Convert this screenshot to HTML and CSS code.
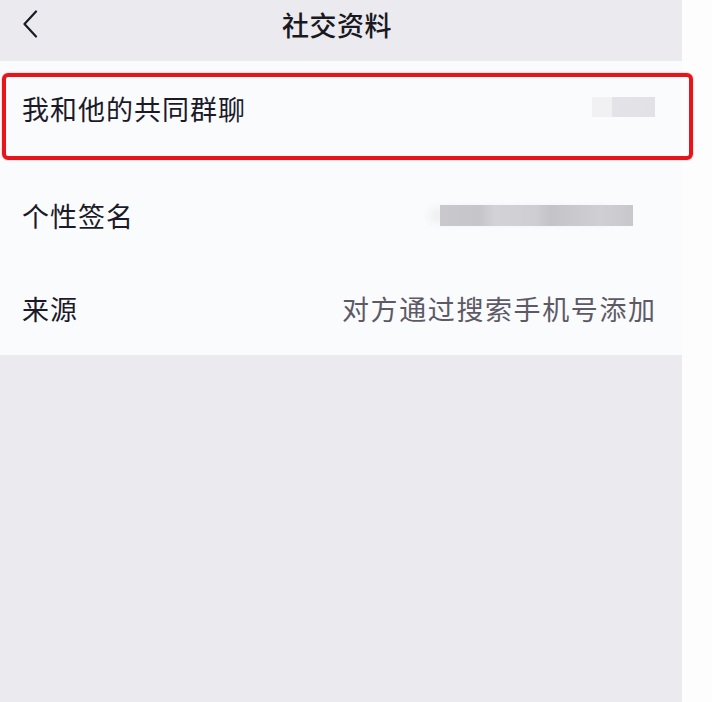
FILE: index.html
```html
<!DOCTYPE html>
<html lang="zh-CN">
<head>
<meta charset="utf-8">
<title>社交资料</title>
<link rel="stylesheet" href="styles.css">
</head>
<body>
<div class="screen">
  <div class="phone">
    <header class="nav">
      <svg class="back" width="16" height="28" viewBox="0 0 16 28" fill="none"><path d="M14 1.5 L2.5 14 L14 26.5" stroke="#1b1b24" stroke-width="2.2" stroke-linecap="round" stroke-linejoin="round"/></svg>
      <h1 class="title">社交资料</h1>
    </header>
    <section class="list">
      <div class="row row-first">
        <span class="label">我和他的共同群聊</span>
        <span class="blur blur-small"></span>
      </div>
      <div class="row">
        <span class="label">个性签名</span>
        <span class="blur blur-wide"></span>
      </div>
      <div class="row">
        <span class="label">来源</span>
        <span class="value">对方通过搜索手机号添加</span>
      </div>
    </section>
    <div class="filler"></div>
  </div>
  <div class="strip"></div>
  <div class="highlight"></div>
</div>
</body>
</html>
```

FILE: styles.css
```css
html, body {
  margin: 0;
  padding: 0;
  background: #fdfdfe;
}

body {
  font-family: "Noto Sans CJK SC", "Noto Sans", sans-serif;
  color: #1c1a28;
}

.screen {
  position: relative;
  display: flex;
  width: 712px;
  height: 702px;
  overflow: hidden;
}

.phone {
  width: 682px;
  display: flex;
  flex-direction: column;
}

.strip {
  flex: 1;
  background: #fdfdfe;
}

.nav {
  height: 61px;
  box-sizing: border-box;
  background: #ebebef;
  display: grid;
  grid-template-columns: 1fr auto 1fr;
  align-items: center;
  padding: 0 0 13px 22px;
}

.back {
  display: block;
}

.title {
  margin: 0 0 0 -30px;
  font-size: 27px;
  font-weight: 500;
  letter-spacing: 0.5px;
  line-height: 1;
  color: #1a1820;
}

.list {
  background: #fafbfd;
  display: flex;
  flex-direction: column;
}

.row {
  height: 93px;
  display: flex;
  align-items: center;
  justify-content: space-between;
  padding: 0 27px 0 22px;
}

.row-first {
  height: 108px;
  align-items: flex-start;
  padding-top: 32px;
  box-sizing: border-box;
}

.label {
  font-size: 27px;
  letter-spacing: 1px;
  line-height: 32px;
  color: #1c1a28;
}

.value {
  font-size: 27px;
  letter-spacing: 1.6px;
  margin-right: -1.6px;
  line-height: 32px;
  color: #5d5a66;
}

.blur {
  display: block;
}

.blur-small {
  width: 63px;
  height: 20px;
  margin-top: 4px;
  background: linear-gradient(90deg, #f1f1f3 0, #f1f1f3 20px, #e4e4e8 20px, #e2e2e6 100%);
}

.blur-wide {
  width: 193px;
  height: 21px;
  margin-right: 22px;
  background: linear-gradient(90deg, #c9c9cd 0, #c6c6ca 40px, #d3d3d7 55px, #cfcfd3 95px, #c4c4c8 110px, #cbcbcf 140px, #d0d0d4 160px, #c8c8cc 100%);
  box-shadow: -14px 0 10px -4px #eeeef1;
}

.filler {
  flex: 1;
  background: #ebebef;
}

.highlight {
  position: absolute;
  left: 2px;
  top: 73px;
  width: 683px;
  height: 79px;
  border: 4px solid #e6141b;
  border-radius: 6px;
  box-shadow: 0 0 2px rgba(230, 20, 27, 0.4);
}
```
